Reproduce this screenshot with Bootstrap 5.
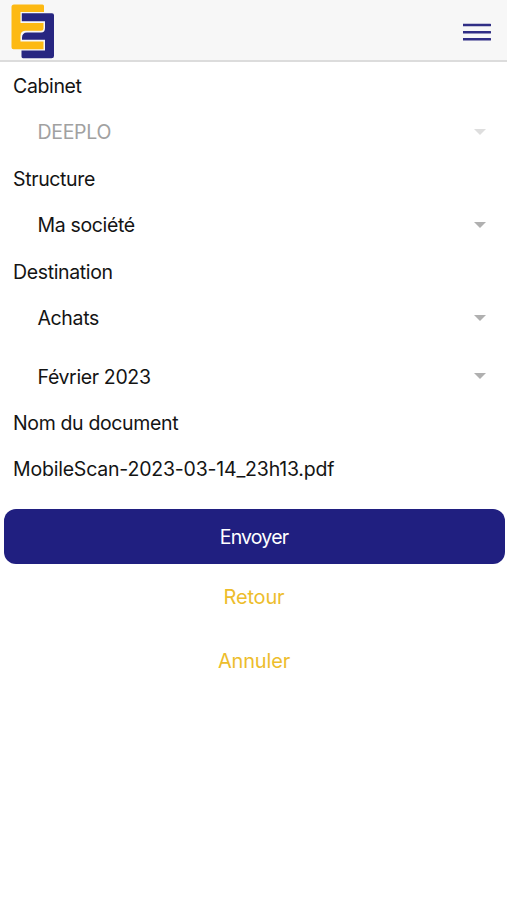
<!DOCTYPE html>
<html lang="fr">
<head>
<meta charset="utf-8">
<meta name="viewport" content="width=device-width, initial-scale=1">
<title>Envoi de document</title>
<link href="https://cdn.jsdelivr.net/npm/bootstrap@5.3.0/dist/css/bootstrap.min.css" rel="stylesheet">
<style>
body{font-family:Inter,"Liberation Sans",sans-serif;font-size:19.5px;color:#141414;background:#fff;line-height:1.2;letter-spacing:-.36px}
.topbar{height:62px;background:#f7f7f7;border-bottom:2px solid #dcdcdc}
.topbar svg{display:block}
.form-area{padding-top:8px}
.field-label{height:34px;padding-left:13px;margin:0}
.field-value{height:58.7px;padding:0 21px 0 37.5px}
.field-value.file-name{padding-left:13px;letter-spacing:-.2px}
.field-value.inactive{color:#a1a1a1;letter-spacing:-.3px;padding-bottom:1px}
.caret{width:0;height:0;border:6px solid transparent;border-top-color:#b0b0b0;border-bottom:0;margin-bottom:2px}
.inactive .caret{border-top-color:#dedede;margin-bottom:1px}
.actions{padding:10px 2.5px 0 3.5px}
.actions .btn{height:54.5px;padding:0;border:0;border-radius:12px;font-size:19.5px}
.actions .btn-send,.actions .btn-send:hover{background:#201f80;color:#fff;letter-spacing:-.8px;padding-top:1px;margin-bottom:6px}
.actions .btn-plain,.actions .btn-plain:hover{color:#edbd2c;font-size:20px;letter-spacing:-.15px}
.actions .btn-plain + .btn-plain{margin-top:9.5px}
</style>
</head>
<body>
<header class="topbar d-flex justify-content-between align-items-start">
  <svg width="60" height="60" viewBox="0 0 60 60" role="img" aria-label="Logo">
    <path fill="#fdb913" d="M14 4.500H42.500Q44 4.500 44 6V12H20.500V23H43.500V28.500Q43.500 30.800 41 30.800H25Q20.500 31 20.500 36V41.500H43.500V49.300H13.500Q11.500 49.300 11.500 47.300V7Q11.500 4.500 14 4.500Z"/>
    <path fill="#272681" d="M21.800 13.300H52Q54 13.300 54 15.300V56Q54 58.300 51.500 58.300H23Q21.500 58.300 21.500 56.500V50.600H45V39.700H22V38Q22 32.500 27 32.500H41Q45 32.500 45 28V21.300H21.800Z"/>
  </svg>
  <button class="btn p-0 border-0 rounded-0 me-3" type="button" aria-label="Menu">
    <svg width="28" height="60" viewBox="0 0 28 60"><path d="M.5 25H27.500M.5 32.200H27.500M.5 39.300H27.500" transform="translate(-.3)" stroke="#302e85" stroke-width="2.500" stroke-linecap="round"/></svg>
  </button>
</header>
<main class="form-area">
  <div class="field-label d-flex align-items-center">Cabinet</div>
  <div class="field-value inactive d-flex align-items-center justify-content-between"><span>DEEPLO</span><span class="caret"></span></div>
  <div class="field-label d-flex align-items-center">Structure</div>
  <div class="field-value d-flex align-items-center justify-content-between"><span>Ma société</span><span class="caret"></span></div>
  <div class="field-label d-flex align-items-center">Destination</div>
  <div class="field-value d-flex align-items-center justify-content-between"><span>Achats</span><span class="caret"></span></div>
  <div class="field-value d-flex align-items-center justify-content-between"><span>Février 2023</span><span class="caret"></span></div>
  <div class="field-label d-flex align-items-center">Nom du document</div>
  <div class="field-value file-name d-flex align-items-center">MobileScan-2023-03-14_23h13.pdf</div>
  <div class="actions d-flex flex-column">
    <button class="btn btn-send w-100" type="button">Envoyer</button>
    <button class="btn btn-plain w-100" type="button">Retour</button>
    <button class="btn btn-plain w-100" type="button">Annuler</button>
  </div>
</main>
<script src="https://cdn.jsdelivr.net/npm/bootstrap@5.3.0/dist/js/bootstrap.bundle.min.js"></script>
</body>
</html>
